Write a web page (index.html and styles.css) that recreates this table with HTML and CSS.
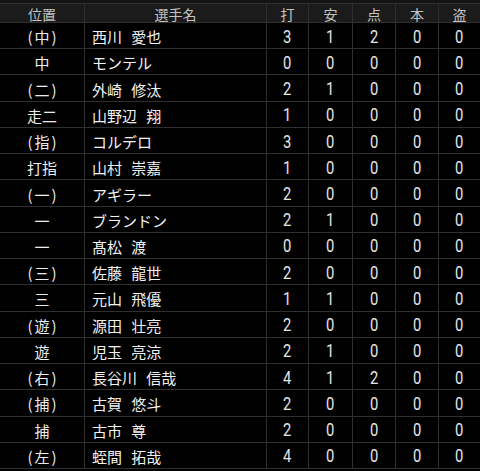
FILE: index.html
```html
<!DOCTYPE html>
<html lang="ja">
<head>
<meta charset="utf-8">
<link rel="stylesheet" href="styles.css">
</head>
<body>
<div class="strip"></div>
<div class="grid">
  <div class="c h">位置</div><div class="c h">選手名</div><div class="c h">打</div><div class="c h">安</div><div class="c h">点</div><div class="c h">本</div><div class="c h last">盗</div>

  <div class="c p"><i>(</i>中<i>)</i></div><div class="c n">西川 愛也</div><div class="c d"><span>3</span></div><div class="c d"><span>1</span></div><div class="c d"><span>2</span></div><div class="c d"><span>0</span></div><div class="c d last"><span>0</span></div>
  <div class="c p">中</div><div class="c n">モンテル</div><div class="c d"><span>0</span></div><div class="c d"><span>0</span></div><div class="c d"><span>0</span></div><div class="c d"><span>0</span></div><div class="c d last"><span>0</span></div>
  <div class="c p"><i>(</i>二<i>)</i></div><div class="c n">外崎 修汰</div><div class="c d"><span>2</span></div><div class="c d"><span>1</span></div><div class="c d"><span>0</span></div><div class="c d"><span>0</span></div><div class="c d last"><span>0</span></div>
  <div class="c p">走二</div><div class="c n">山野辺 翔</div><div class="c d"><span>1</span></div><div class="c d"><span>0</span></div><div class="c d"><span>0</span></div><div class="c d"><span>0</span></div><div class="c d last"><span>0</span></div>
  <div class="c p"><i>(</i>指<i>)</i></div><div class="c n">コルデロ</div><div class="c d"><span>3</span></div><div class="c d"><span>0</span></div><div class="c d"><span>0</span></div><div class="c d"><span>0</span></div><div class="c d last"><span>0</span></div>
  <div class="c p">打指</div><div class="c n">山村 崇嘉</div><div class="c d"><span>1</span></div><div class="c d"><span>0</span></div><div class="c d"><span>0</span></div><div class="c d"><span>0</span></div><div class="c d last"><span>0</span></div>
  <div class="c p"><i>(</i>一<i>)</i></div><div class="c n">アギラー</div><div class="c d"><span>2</span></div><div class="c d"><span>0</span></div><div class="c d"><span>0</span></div><div class="c d"><span>0</span></div><div class="c d last"><span>0</span></div>
  <div class="c p">一</div><div class="c n">ブランドン</div><div class="c d"><span>2</span></div><div class="c d"><span>1</span></div><div class="c d"><span>0</span></div><div class="c d"><span>0</span></div><div class="c d last"><span>0</span></div>
  <div class="c p">一</div><div class="c n">髙松 渡</div><div class="c d"><span>0</span></div><div class="c d"><span>0</span></div><div class="c d"><span>0</span></div><div class="c d"><span>0</span></div><div class="c d last"><span>0</span></div>
  <div class="c p"><i>(</i>三<i>)</i></div><div class="c n">佐藤 龍世</div><div class="c d"><span>2</span></div><div class="c d"><span>0</span></div><div class="c d"><span>0</span></div><div class="c d"><span>0</span></div><div class="c d last"><span>0</span></div>
  <div class="c p">三</div><div class="c n">元山 飛優</div><div class="c d"><span>1</span></div><div class="c d"><span>1</span></div><div class="c d"><span>0</span></div><div class="c d"><span>0</span></div><div class="c d last"><span>0</span></div>
  <div class="c p"><i>(</i>遊<i>)</i></div><div class="c n">源田 壮亮</div><div class="c d"><span>2</span></div><div class="c d"><span>0</span></div><div class="c d"><span>0</span></div><div class="c d"><span>0</span></div><div class="c d last"><span>0</span></div>
  <div class="c p">遊</div><div class="c n">児玉 亮涼</div><div class="c d"><span>2</span></div><div class="c d"><span>1</span></div><div class="c d"><span>0</span></div><div class="c d"><span>0</span></div><div class="c d last"><span>0</span></div>
  <div class="c p"><i>(</i>右<i>)</i></div><div class="c n">長谷川 信哉</div><div class="c d"><span>4</span></div><div class="c d"><span>1</span></div><div class="c d"><span>2</span></div><div class="c d"><span>0</span></div><div class="c d last"><span>0</span></div>
  <div class="c p"><i>(</i>捕<i>)</i></div><div class="c n">古賀 悠斗</div><div class="c d"><span>2</span></div><div class="c d"><span>0</span></div><div class="c d"><span>0</span></div><div class="c d"><span>0</span></div><div class="c d last"><span>0</span></div>
  <div class="c p">捕</div><div class="c n">古市 尊</div><div class="c d"><span>2</span></div><div class="c d"><span>0</span></div><div class="c d"><span>0</span></div><div class="c d"><span>0</span></div><div class="c d last"><span>0</span></div>
  <div class="c p"><i>(</i>左<i>)</i></div><div class="c n">蛭間 拓哉</div><div class="c d"><span>4</span></div><div class="c d"><span>0</span></div><div class="c d"><span>0</span></div><div class="c d"><span>0</span></div><div class="c d last"><span>0</span></div>
</div>
</body>
</html>
```

FILE: styles.css
```css
html, body {
  margin: 0;
  padding: 0;
  background: #000;
  width: 480px;
  height: 471px;
  overflow: hidden;
}
body {
  font-family: "Noto Sans CJK JP", "Noto Sans", sans-serif;
  color: #f2f2f2;
}
.strip {
  height: 3px;
  background: #141414;
}
.grid {
  display: grid;
  grid-template-columns: 85px 182px 42px 44px 43px 43px 41px;
  grid-template-rows: 19px repeat(17, 26.235px);
  border-top: 1px solid #2f2f2f;
}
.c {
  box-sizing: border-box;
  border-right: 1px solid #2f2f2f;
  border-bottom: 1px solid #2f2f2f;
  display: flex;
  align-items: center;
  justify-content: center;
  font-size: 15px;
  line-height: 1;
  padding-top: 2px;
}
.c.last {
  border-right: none;
}
.h {
  background: #1b1b1b;
  color: #c4c4c4;
  font-size: 14px;
  padding-top: 2px;
}
.n {
  justify-content: flex-start;
  padding-left: 7px;
  word-spacing: 6px;
  font-size: 15px;
}
.p {
  color: #ececec;
}
.p i {
  font-style: normal;
  margin: 0 2px;
}
.d span {
  font-family: "Roboto", "Noto Sans", sans-serif;
  font-size: 18px;
  color: #e6e6e6;
  display: inline-block;
  transform: scaleX(0.82);
}
```
